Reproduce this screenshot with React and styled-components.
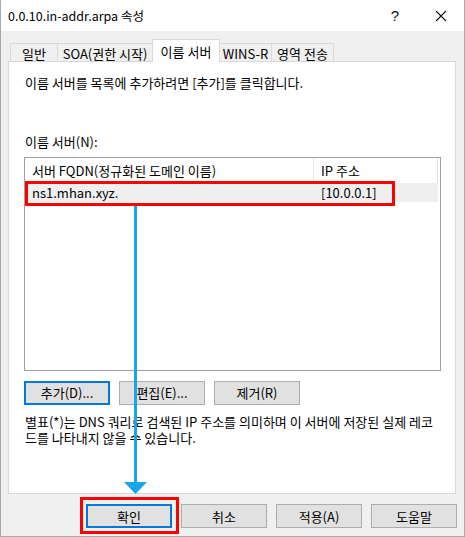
import React from 'react'
import styled, { createGlobalStyle } from 'styled-components'

const GlobalStyle = createGlobalStyle`
  html, body { margin: 0; padding: 0; background: #fff; }
  body {
    font-family: "Noto Sans CJK KR", "Noto Sans", sans-serif;
    font-size: 13px;
    color: #000;
  }
`

const tabs = [
  { label: '일반', w: 48 },
  { label: 'SOA(권한 시작)', w: 96 },
  { label: '이름 서버', w: 68, active: true },
  { label: 'WINS-R', w: 53 },
  { label: '영역 전송', w: 63 },
]

const Window = styled.div`
  position: relative;
  box-sizing: border-box;
  width: 465px;
  height: 537px;
  border: 1px solid #a9a9a9;
  border-top: none;
  display: flex;
  flex-direction: column;
  background: #f0f0f0;
`

const TitleBar = styled.div`
  height: 31px;
  background: #fff;
  display: flex;
  align-items: center;
  padding-left: 7px;
  line-height: 16px;
  font-size: 12.5px;
`

const Title = styled.div`
  flex: 1;
`

const Help = styled.div`
  width: 46px;
  text-align: center;
  font-size: 15px;
  font-family: "Liberation Sans", sans-serif;
  color: #111;
`

const Close = styled.div`
  width: 46px;
  height: 31px;
  display: flex;
  align-items: center;
  justify-content: center;
`

const Body = styled.div`
  flex: 1;
  padding: 8px 8px 0 7px;
  display: flex;
  flex-direction: column;
`

const TabStrip = styled.div`
  height: 22px;
  display: flex;
  align-items: flex-end;
  padding-left: 2px;
`

const Tab = styled.div`
  position: relative;
  box-sizing: border-box;
  width: ${p => p.w}px;
  height: ${p => (p.active ? 23 : 18)}px;
  margin-bottom: ${p => (p.active ? -1 : 0)}px;
  margin-left: -1px;
  z-index: ${p => (p.active ? 2 : 1)};
  background: ${p => (p.active ? '#fff' : '#f0f0f0')};
  border: 1px solid #d9d9d9;
  border-bottom: none;
  display: flex;
  align-items: center;
  justify-content: center;
  padding-top: ${p => (p.active ? 0 : 1)}px;
  white-space: nowrap;
  &:first-child { margin-left: 0; }
`

const Panel = styled.div`
  box-sizing: border-box;
  height: 433px;
  background: #fff;
  border: 1px solid #d9d9d9;
  padding: 13px 16px 0 16px;
  line-height: 16px;
`

const Intro = styled.div`
  margin-bottom: 43px;
`

const Label = styled.div`
  margin-bottom: 7px;
`

const ListBox = styled.div`
  box-sizing: border-box;
  width: 417px;
  height: 214px;
  margin-left: -1px;
  border: 1px solid #a0a0a0;
  padding-right: 2px;
`

const Row = styled.div`
  display: flex;
  height: ${p => p.h}px;
  align-items: center;
  background: ${p => (p.selected ? '#efefef' : '#fff')};
`

const Cell = styled.div`
  box-sizing: border-box;
  width: ${p => p.w}px;
  height: 100%;
  display: flex;
  align-items: center;
  padding-left: 7px;
  border-right: ${p => (p.divider ? '1px solid #e5e5e5' : 'none')};
  white-space: nowrap;
`

const ButtonRow = styled.div`
  display: flex;
  gap: ${p => p.gap}px;
  justify-content: ${p => p.justify || 'flex-start'};
`

const Button = styled.div`
  box-sizing: border-box;
  width: ${p => p.w}px;
  height: 24px;
  background: #e1e1e1;
  border: ${p => (p.focus ? '2px solid #0078d7' : '1px solid #adadad')};
  display: flex;
  align-items: center;
  justify-content: center;
`

const PanelButtons = styled(ButtonRow)`
  margin-top: 10px;
  margin-left: -1px;
`

const Note = styled.div`
  margin-top: 9px;
  width: 418px;
`

const Footer = styled(ButtonRow)`
  margin-top: 10px;
  margin-right: -1px;
`

const Overlay = styled.svg`
  position: absolute;
  left: -1px;
  top: 0;
  pointer-events: none;
`

export default function App() {
  return (
    <>
      <GlobalStyle />
      <Window>
        <TitleBar>
          <Title>0.0.10.in-addr.arpa 속성</Title>
          <Help>?</Help>
          <Close>
            <svg width="12" height="12" viewBox="0 0 12 12">
              <path d="M1 1 L11 11 M11 1 L1 11" stroke="#111" strokeWidth="1.1" />
            </svg>
          </Close>
        </TitleBar>
        <Body>
          <TabStrip>
            {tabs.map(t => (
              <Tab key={t.label} w={t.w} active={t.active}>{t.label}</Tab>
            ))}
          </TabStrip>
          <Panel>
            <Intro>이름 서버를 목록에 추가하려면 [추가]를 클릭합니다.</Intro>
            <Label>이름 서버(N):</Label>
            <ListBox>
              <Row h={25}>
                <Cell w={289} divider>서버 FQDN(정규화된 도메인 이름)</Cell>
                <Cell w={124} divider>IP 주소</Cell>
              </Row>
              <Row h={19} selected>
                <Cell w={289}>ns1.mhan.xyz.</Cell>
                <Cell w={124}>[10.0.0.1]</Cell>
              </Row>
            </ListBox>
            <PanelButtons gap={9}>
              <Button w={86} focus>추가(D)...</Button>
              <Button w={86}>편집(E)...</Button>
              <Button w={86}>제거(R)</Button>
            </PanelButtons>
            <Note>별표(*)는 DNS 쿼리로 검색된 IP 주소를 의미하며 이 서버에 저장된 실제 레코드를 나타내지 않을 수 있습니다.</Note>
          </Panel>
          <Footer gap={9} justify="flex-end">
            <Button w={86} focus>확인</Button>
            <Button w={86}>취소</Button>
            <Button w={86}>적용(A)</Button>
            <Button w={86}>도움말</Button>
          </Footer>
        </Body>
        <Overlay width="465" height="537" viewBox="0 0 465 537">
          <rect x="26.5" y="182.5" width="367" height="22" fill="none" stroke="#ff0000" strokeWidth="3" />
          <rect x="81.5" y="498.5" width="96" height="34" fill="none" stroke="#ff0000" strokeWidth="3" />
          <rect x="134" y="206" width="3" height="277" fill="#17a6e9" />
          <polygon points="124,482 147,482 135.5,494" fill="#17a6e9" />
        </Overlay>
      </Window>
    </>
  )
}
